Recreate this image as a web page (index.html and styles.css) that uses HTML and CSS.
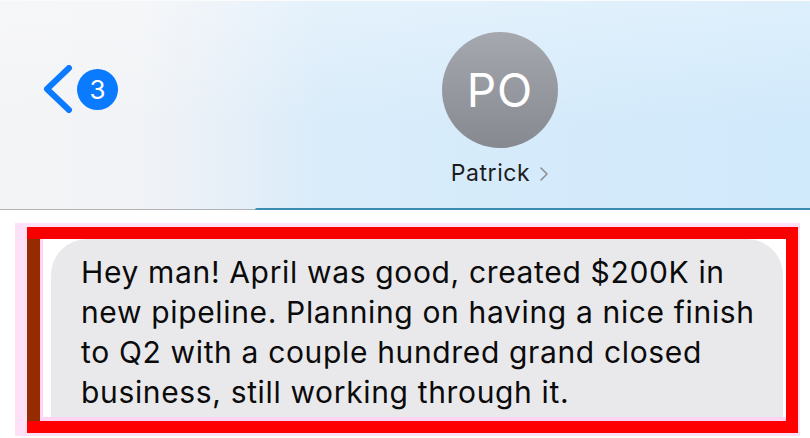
FILE: index.html
```html
<!DOCTYPE html>
<html>
<head>
<meta charset="utf-8">
<title>Patrick</title>
<link rel="stylesheet" href="styles.css">
</head>
<body>

<header class="nav">
    <a class="back" href="#">
        <svg class="back-chevron" width="30" height="48" viewBox="0 0 30 48">
            <path d="M26 3 L4 24 L26 45" fill="none" stroke="#0a7aff" stroke-width="6" stroke-linecap="round" stroke-linejoin="round"/>
        </svg>
        <span class="badge">3</span>
    </a>
    <div class="contact">
        <div class="avatar">PO</div>
        <div class="name">
            Patrick
            <svg class="name-chevron" width="10" height="16" viewBox="0 0 10 16">
                <path d="M2 2 L8 8 L2 14" fill="none" stroke="#8e8e93" stroke-width="1.6" stroke-linecap="round" stroke-linejoin="round"/>
            </svg>
        </div>
    </div>
</header>

<div class="thread">
    <div class="mark">
        <div class="highlight">
            <div class="bubble">
                Hey man! April was good, created $200K in<br>
                new pipeline. Planning on having a nice finish<br>
                to Q2 with a couple hundred grand closed<br>
                business, still working through it.
            </div>
        </div>
    </div>
</div>

</body>
</html>
```

FILE: styles.css
```css
html, body {
    margin: 0;
    padding: 0;
    background: #fff;
}

body {
    width: 810px;
    height: 438px;
    overflow: hidden;
    font-family: Inter, "Liberation Sans", sans-serif;
    color: #000;
}

.nav {
    position: relative;
    display: flex;
    align-items: flex-start;
    height: 210px;
    box-sizing: border-box;
    padding-top: 31px;
    border-top: 1px solid #fbfbfc;
    border-bottom: 1px solid #b3b4b6;
    background:
        linear-gradient(to bottom, rgba(255, 255, 255, 0.3), rgba(255, 255, 255, 0) 60%),
        linear-gradient(to right, #f3f4f6 0, #f1f3f6 140px, #e6eff8 230px, #d9ecfa 320px, #d0e9fb 100%);
}

.nav::after {
    content: "";
    position: absolute;
    left: 255px;
    right: 0;
    bottom: -1px;
    height: 2px;
    border-top-left-radius: 6px;
    background: #3b8bb3;
}

.back {
    display: flex;
    align-items: center;
    gap: 4px;
    margin-left: 43px;
    margin-top: 33px;
    text-decoration: none;
}

.back-chevron {
    display: block;
}

.badge {
    width: 41px;
    height: 41px;
    border-radius: 50%;
    background: #0a7aff;
    color: #fff;
    font-size: 26px;
    line-height: 41px;
    text-align: center;
}

.contact {
    display: flex;
    flex-direction: column;
    align-items: center;
    width: 116px;
    margin-left: 324px;
}

.avatar {
    width: 116px;
    height: 116px;
    border-radius: 50%;
    background: linear-gradient(to bottom, #a6a8af, #878990);
    color: #fff;
    font-size: 46px;
    letter-spacing: 1px;
    line-height: 116px;
    text-align: center;
}

.name {
    display: flex;
    align-items: center;
    gap: 9px;
    margin-top: 11px;
    font-size: 23px;
    letter-spacing: 0.6px;
    line-height: 28px;
    color: #1c1c1e;
    white-space: nowrap;
}

.name-chevron {
    display: block;
    margin-top: 2px;
}

.thread {
    padding: 13px 0 0 15px;
}

.mark {
    width: 785px;
    box-sizing: border-box;
    padding: 4px 2px 3px 12px;
    background: #ffe1f7;
}

.highlight {
    border: 12px solid #ff0000;
    border-left: 0;
    border-top-color: #f80000;
    background: #fff;
    box-shadow: inset 13px 0 0 #952b00, inset 16px -4px 0 #ffd3f2;
    padding: 0 3px 4px 24px;
}

.bubble {
    background: #e9e9eb;
    border-radius: 36px 36px 0 0;
    padding: 13px 20px 5px 30px;
    font-size: 30px;
    letter-spacing: 0.65px;
    line-height: 40px;
    color: #0b0b0c;
    white-space: nowrap;
}
```
